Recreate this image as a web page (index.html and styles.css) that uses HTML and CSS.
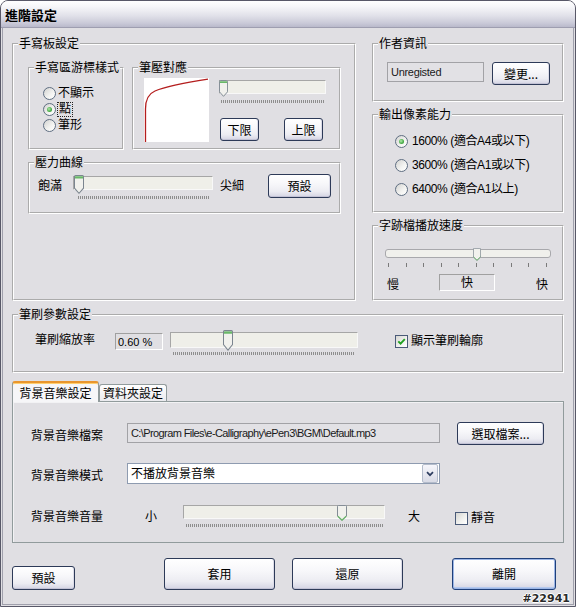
FILE: index.html
```html
<!DOCTYPE html>
<html lang="zh-Hant">
<head>
<meta charset="utf-8">
<title>進階設定</title>
<link rel="stylesheet" href="styles.css">
</head>
<body>
<div class="window">
  <div class="titlebar">進階設定</div>
  <div class="body">
    <div class="top">
      <section class="g tablet">
        <div class="lg">手寫板設定</div>
        <div class="tablet-inner">
          <div class="subrow">
            <section class="g cursor">
              <div class="lg">手寫區游標樣式</div>
              <div class="radios">
                <div class="opt"><span class="radio"></span><span class="lbl">不顯示</span></div>
                <div class="opt"><span class="radio on"></span><span class="lbl focus">點</span></div>
                <div class="opt"><span class="radio"></span><span class="lbl">筆形</span></div>
              </div>
            </section>
            <section class="g pressure">
              <div class="lg">筆壓對應</div>
              <div class="pressure-inner">
                <div class="curve">
                  <svg viewBox="0 0 65 64" width="65" height="64"><path d="M1.5 64 L1.5 31 C1.5 20 5 15.5 11 13 C22 8.5 40 5 64 1.2" fill="none" stroke="#b41e1e" stroke-width="1.3"/></svg>
                </div>
                <div class="pr-ctrl">
                  <div class="slider s-pr">
                    <div class="track"></div>
                    <svg class="thumb t-pr" style="left:0px" viewBox="0 0 10 18" preserveAspectRatio="none"><path d="M1.5 .5H8.5A1 1 0 0 1 9.5 1.5V12.5L5 17.3L.5 12.5V1.5A1 1 0 0 1 1.5 .5Z" fill="#f1f1ed" stroke="#7b858f"/><path d="M1 1.2H9V3.2H1Z" fill="#69b869"/></svg>
                    <div class="ticks"></div>
                  </div>
                  <div class="pr-btns">
                    <button class="btn btn-sm">下限</button>
                    <button class="btn btn-sm">上限</button>
                  </div>
                </div>
              </div>
            </section>
          </div>
          <section class="g curvebox">
            <div class="lg">壓力曲線</div>
            <div class="curve-row">
              <span class="lbl-a">飽滿</span>
              <div class="slider s-curve">
                <div class="track"></div>
                <svg class="thumb t-curve" style="left:1px" viewBox="0 0 10 18" preserveAspectRatio="none"><path d="M1.5 .5H8.5A1 1 0 0 1 9.5 1.5V12.5L5 17.3L.5 12.5V1.5A1 1 0 0 1 1.5 .5Z" fill="#f1f1ed" stroke="#7b858f"/><path d="M1 1.2H9V3.2H1Z" fill="#69b869"/></svg>
                <div class="ticks"></div>
              </div>
              <span class="lbl-b">尖細</span>
              <button class="btn btn-def">預設</button>
            </div>
          </section>
        </div>
      </section>

      <div class="rightcol">
        <section class="g author">
          <div class="lg">作者資訊</div>
          <div class="author-row">
            <div class="field f-author">Unregisted</div>
            <button class="btn btn-change">變更...</button>
          </div>
        </section>
        <section class="g output">
          <div class="lg">輸出像素能力</div>
          <div class="out-radios">
            <div class="opt opt24"><span class="radio on"></span><span class="olbl">1600% (適合A4或以下)</span></div>
            <div class="opt opt24"><span class="radio"></span><span class="olbl">3600% (適合A1或以下)</span></div>
            <div class="opt opt24"><span class="radio"></span><span class="olbl">6400% (適合A1以上)</span></div>
          </div>
        </section>
        <section class="g speed">
          <div class="lg">字跡檔播放速度</div>
          <div class="speed-inner">
            <div class="slider s-speed">
              <div class="track track-thin"></div>
              <svg class="thumb t-speed" style="left:88px" viewBox="0 0 10 18" preserveAspectRatio="none"><path d="M1.5 .5H8.5A1 1 0 0 1 9.5 1.5V12.5L5 17.3L.5 12.5V1.5A1 1 0 0 1 1.5 .5Z" fill="#f1f1ed" stroke="#7b858f"/><path d="M.8 12.5L5 17L9.2 12.5" fill="none" stroke="#69b869" stroke-width="1.2"/></svg>
              <div class="tick-set"><i></i><i></i><i></i><i></i><i></i><i></i><i></i><i></i><i></i><i></i></div>
            </div>
            <div class="speed-labels">
              <span class="sl">慢</span>
              <div class="sunken">快</div>
              <span class="sl fast-r">快</span>
            </div>
          </div>
        </section>
      </div>
    </div>

    <section class="g brush">
      <div class="lg">筆刷參數設定</div>
      <div class="brush-row">
        <span class="lbl-scale">筆刷縮放率</span>
        <div class="f-scale">0.60 %</div>
        <div class="slider s-brush">
          <div class="track"></div>
          <svg class="thumb t-brush" style="left:53px" viewBox="0 0 10 18" preserveAspectRatio="none"><path d="M1.5 .5H8.5A1 1 0 0 1 9.5 1.5V12.5L5 17.3L.5 12.5V1.5A1 1 0 0 1 1.5 .5Z" fill="#f1f1ed" stroke="#7b858f"/><path d="M1 1.2H9V3.2H1Z" fill="#69b869"/></svg>
          <div class="ticks"></div>
        </div>
        <span class="chk chk-brush"><svg viewBox="0 0 11 11" width="11" height="11"><path d="M2.3 5.3L4.6 7.6L8.8 3.2" fill="none" stroke="#21a121" stroke-width="1.9"/></svg></span>
        <span class="chk-lbl">顯示筆刷輪廓</span>
      </div>
    </section>

    <div class="tabs">
      <div class="tabstrip">
        <div class="tab active">背景音樂設定</div>
        <div class="tab idle">資料夾設定</div>
      </div>
      <div class="panel">
        <div class="panel-inner">
          <div class="prow r1">
            <span class="plbl">背景音樂檔案</span>
            <div class="field f-path">C:\Program Files\e-Calligraphy\ePen3\BGM\Default.mp3</div>
            <button class="btn btn-browse">選取檔案...</button>
          </div>
          <div class="prow r2">
            <span class="plbl">背景音樂模式</span>
            <div class="select">
              <span>不播放背景音樂</span>
              <span class="dd"><svg viewBox="0 0 8 6" width="8" height="6"><path d="M1 1.2L4 4.2L7 1.2" fill="none" stroke="#2e3e60" stroke-width="1.7"/></svg></span>
            </div>
          </div>
          <div class="prow r3">
            <span class="plbl">背景音樂音量</span>
            <span class="v-small">小</span>
            <div class="slider s-vol">
              <div class="track"></div>
              <svg class="thumb t-vol" style="left:154px" viewBox="0 0 10 18" preserveAspectRatio="none"><path d="M1.5 .5H8.5A1 1 0 0 1 9.5 1.5V12.5L5 17.3L.5 12.5V1.5A1 1 0 0 1 1.5 .5Z" fill="#f1f1ed" stroke="#7b858f"/><path d="M.8 12.5L5 17L9.2 12.5" fill="none" stroke="#69b869" stroke-width="1.2"/></svg>
              <div class="ticks"></div>
            </div>
            <span class="v-big">大</span>
            <span class="chk chk-mute"></span>
            <span class="mute-lbl">靜音</span>
          </div>
        </div>
      </div>
    </div>

    <div class="actions">
      <button class="btn b-def">預設</button>
      <button class="btn b-apply">套用</button>
      <button class="btn b-undo">還原</button>
      <button class="btn b-exit">離開</button>
    </div>
  </div>
  <div class="stamp">#22941</div>
</div>
</body>
</html>
```

FILE: styles.css
```css
* { box-sizing: border-box; }
html, body { margin: 0; padding: 0; }
body {
  width: 576px;
  height: 607px;
  overflow: hidden;
  background: #ffffff;
  font-family: "Liberation Sans", "Noto Sans CJK TC", sans-serif;
  font-size: 12px;
  line-height: 14px;
  color: #000;
}

.window {
  position: relative;
  width: 576px;
  height: 607px;
  background: #e0dfe3;
  border: 1px solid #585868;
  border-radius: 8px 8px 0 0;
  display: flex;
  flex-direction: column;
  overflow: hidden;
}

.titlebar {
  flex: none;
  height: 27px;
  padding: 2px 0 0 4px;
  display: flex;
  align-items: center;
  font-family: "Noto Sans CJK TC", sans-serif;
  font-weight: bold;
  font-size: 13px;
  background: linear-gradient(#ffffff 0%, #f6f6f9 22%, #e2e2ea 55%, #cacad8 85%, #b9b9cb 100%);
  border-bottom: 1px solid #9e9eb0;
}

.body {
  flex: 1;
  margin: 0 1px 1px;
  border: 1px solid #a0a0ac;
  border-top: none;
  padding: 9px 9px 0;
  display: flex;
  flex-direction: column;
}

/* group boxes: etched border, caption sits over the top line */
.g {
  flex: none;
  border: 2px groove #ffffff;
}
.lg {
  width: fit-content;
  height: 14px;
  line-height: 14px;
  margin: -8px 0 0 4px;
  padding: 0 1px;
  background: #e0dfe3;
  white-space: nowrap;
}

.top { flex: none; display: flex; align-items: flex-start; gap: 16px; height: 264px; }
.tablet { width: 344px; height: 258px; margin-top: 6px; }
.tablet-inner { padding: 10px 0 0 14px; }
.subrow { display: flex; align-items: flex-start; gap: 8px; }

.cursor { width: 96px; height: 83px; margin-top: 6px; }
.radios { padding: 10px 0 0 13px; }
.opt { display: flex; align-items: center; height: 16px; }
.opt .lbl { margin-left: 2px; }
.focus { outline: 1px dotted #222; padding: 0 1px; line-height: 13px; }

.radio {
  flex: none;
  width: 13px;
  height: 13px;
  border-radius: 50%;
  border: 1px solid #5f6e82;
  background: linear-gradient(135deg, #d2d2d0 0%, #f4f4f2 60%, #ffffff 100%);
  display: flex;
  align-items: center;
  justify-content: center;
}
.radio.on::after {
  content: "";
  width: 5px;
  height: 5px;
  border-radius: 50%;
  background: radial-gradient(circle at 40% 40%, #b6eaae 0%, #4cb04c 55%, #2b8a2b 100%);
}

.pressure { width: 209px; height: 83px; margin-top: 6px; }
.pressure-inner { display: flex; padding: 3px 0 0 10px; }
.curve { flex: none; width: 65px; height: 64px; background: #ffffff; }
.curve svg { display: block; }
.pr-ctrl { margin-left: 10px; width: 107px; padding-top: 2px; }
.pr-btns { display: flex; justify-content: space-between; margin-top: 15px; padding: 0 3px 0 1px; }

/* sliders */
.slider { position: relative; flex: none; }
.track {
  height: 14px;
  background: #efefe9;
  border: 1px solid;
  border-color: #a6a6a6 #f8f8f8 #f8f8f8 #a6a6a6;
}
.track-thin {
  height: 9px;
  border: 1px solid #a8a8ac;
  border-radius: 3px;
  background: #f0f0ec;
}
.thumb { position: absolute; top: 0; display: block; }
.ticks {
  height: 3px;
  margin: 6px 2px 0;
  background: repeating-linear-gradient(90deg, #8e8e8e 0 1px, transparent 1px 2px);
}
.s-pr { width: 107px; }
.t-pr { width: 9px; height: 17px; }

/* buttons */
.btn {
  font: inherit;
  font-family: "Noto Sans CJK TC", "Liberation Sans", sans-serif;
  font-size: 12px;
  line-height: 14px;
  color: #000;
  padding: 0;
  margin: 0;
  border: 1px solid #2d3a58;
  border-radius: 3px;
  background: linear-gradient(#ffffff 0%, #f7f7fa 40%, #ececf2 75%, #d4d4e3 100%);
  box-shadow: inset 0 -1px 0 #c2c2d5, inset -1px 0 0 #dcdce8;
  display: flex;
  align-items: center;
  justify-content: center;
  flex: none;
}
.btn-sm { width: 39px; height: 23px; }

.curvebox { width: 313px; height: 52px; margin-top: 12px; }
.curve-row { display: flex; align-items: flex-start; padding: 4px 0 0 8px; }
.lbl-a { width: 24px; margin-top: 5px; }
.s-curve { width: 140px; margin-left: 11px; margin-top: 2px; }
.s-curve .ticks { margin: 6px 4px 0 5px; }
.t-curve { width: 10px; height: 19px; top: -1px; }
.lbl-b { width: 24px; margin-left: 7px; margin-top: 5px; }
.btn-def { width: 63px; height: 24px; margin-left: 24px; }

/* right column */
.rightcol { width: 192px; display: flex; flex-direction: column; gap: 12px; margin-top: 6px; }
.author { height: 59px; }
.author-row { display: flex; align-items: flex-start; padding: 11px 0 0 13px; }
.field {
  height: 20px;
  border: 1px solid #a2a2a6;
  background: #e2e1e5;
  display: flex;
  align-items: center;
  padding-left: 3px;
  font-size: 11px;
  letter-spacing: -0.3px;
  color: #1a1a1a;
  white-space: nowrap;
  overflow: hidden;
}
.f-author { width: 97px; }
.btn-change { width: 58px; height: 23px; margin-left: 8px; }

.output { height: 99px; }
.out-radios { padding: 7px 0 0 21px; }
.opt24 { height: 24px; }
.olbl { margin-left: 4px; letter-spacing: -0.4px; }

.speed { height: 76px; }
.speed-inner { padding: 16px 0 0 11px; }
.s-speed { width: 166px; }
.t-speed { width: 8px; height: 13px; top: -1px; }
.tick-set { display: flex; justify-content: space-between; width: 159px; height: 4px; margin: 5px 0 0 3px; }
.tick-set i { display: block; width: 1px; height: 4px; background: #7a7a7a; }
.speed-labels { display: flex; align-items: flex-start; margin-top: 7px; padding-left: 2px; }
.sl { margin-top: 4px; width: 12px; }
.sunken {
  width: 56px;
  height: 17px;
  margin-left: 40px;
  border: 1px solid;
  border-color: #a0a0a0 #ffffff #ffffff #a0a0a0;
  display: flex;
  align-items: center;
  justify-content: center;
}
.fast-r { margin-left: 41px; }

/* brush */
.brush { height: 59px; margin-top: 13px; }
.brush-row { display: flex; align-items: flex-start; padding: 10px 0 0 21px; }
.lbl-scale { width: 60px; margin-top: 1px; }
.f-scale {
  width: 48px;
  height: 17px;
  margin-left: 20px;
  margin-top: 1px;
  border: 1px solid;
  border-color: #a0a0a0 #ffffff #ffffff #a0a0a0;
  padding-left: 2px;
  font-size: 11px;
  display: flex;
  align-items: center;
}
.s-brush { width: 188px; margin-left: 7px; }
.s-brush .track { height: 16px; }
.s-brush .ticks { margin: 4px 4px 0 3px; }
.t-brush { width: 10px; height: 21px; top: -2px; }

.chk {
  flex: none;
  width: 13px;
  height: 13px;
  border: 1px solid #4a5a78;
  background: linear-gradient(135deg, #d6d6d2 0%, #f2f2f0 60%, #ffffff 100%);
  display: flex;
  align-items: center;
  justify-content: center;
}
.chk svg { display: block; }
.chk-brush { margin-left: 37px; margin-top: 3px; }
.chk-lbl { margin-left: 3px; margin-top: 2px; }

/* tabs */
.tabs { flex: none; margin-top: 8px; }
.tabstrip { display: flex; align-items: flex-end; height: 20px; position: relative; z-index: 1; }
.tab {
  border: 1px solid #919b9c;
  border-bottom: none;
  border-radius: 3px 3px 0 0;
  display: flex;
  align-items: center;
  justify-content: center;
  font-family: "Noto Sans CJK TC", sans-serif;
}
.tab.active {
  width: 87px;
  height: 21px;
  margin-bottom: -1px;
  background: #f6f6f8;
  border-top: 2px solid #e9962e;
  box-shadow: inset 0 1px 0 #ffcf6e;
}
.tab.idle {
  width: 68px;
  height: 17px;
  background: linear-gradient(#ffffff, #eaeaee);
}
.panel {
  height: 142px;
  border: 1px solid #919b9c;
  background: #e0dfe3;
  box-shadow: inset 1px 1px 0 #f2f2f4;
}
.panel-inner { padding: 20px 0 0 18px; }
.prow { display: flex; align-items: flex-start; }
.plbl { width: 96px; flex: none; }
.r1 .plbl { margin-top: 7px; }
.f-path { width: 313px; margin-top: 1px; letter-spacing: -0.6px; }
.btn-browse { width: 87px; height: 23px; margin-left: 17px; }
.r2 { margin-top: 18px; }
.r2 .plbl { margin-top: 6px; }
.select {
  width: 313px;
  height: 21px;
  background: #ffffff;
  border: 1px solid #8e9bb0;
  display: flex;
  align-items: center;
  justify-content: space-between;
  padding: 0 1px 0 3px;
}
.dd {
  width: 16px;
  height: 19px;
  border: 1px solid #b4bccb;
  border-radius: 2px;
  background: linear-gradient(#f6f6fb, #d9dbe6);
  display: flex;
  align-items: center;
  justify-content: center;
}
.dd svg { display: block; }
.r3 { margin-top: 19px; }
.r3 .plbl { margin-top: 7px; }
.v-small { width: 12px; margin-left: 18px; margin-top: 7px; }
.s-vol { width: 202px; margin-left: 26px; margin-top: 2px; }
.s-vol .ticks { margin: 5px 2px 0 3px; }
.t-vol { width: 10px; height: 16px; top: 0; }
.v-big { width: 12px; margin-left: 23px; margin-top: 7px; }
.chk-mute { margin-left: 35px; margin-top: 9px; }
.mute-lbl { margin-left: 3px; margin-top: 8px; }

/* action buttons */
.actions { flex: none; display: flex; align-items: flex-end; height: 32px; margin-top: 15px; }
.b-def { width: 63px; height: 24px; }
.b-apply { width: 111px; height: 32px; margin-left: 89px; }
.b-undo { width: 111px; height: 32px; margin-left: 17px; }
.b-exit {
  width: 104px;
  height: 32px;
  margin-left: 49px;
  border-color: #1f3f7a;
  box-shadow: inset 0 0 0 1px #9cb6e6, inset 0 -2px 0 #b4c8ee;
}

.stamp {
  position: absolute;
  right: 5px;
  bottom: 1px;
  font-family: "DejaVu Sans", sans-serif;
  font-weight: bold;
  font-size: 11px;
  line-height: 12px;
  color: #2a2a2a;
  text-shadow: 1px 0 0 #fff, -1px 0 0 #fff, 0 1px 0 #fff, 0 -1px 0 #fff;
}
```
